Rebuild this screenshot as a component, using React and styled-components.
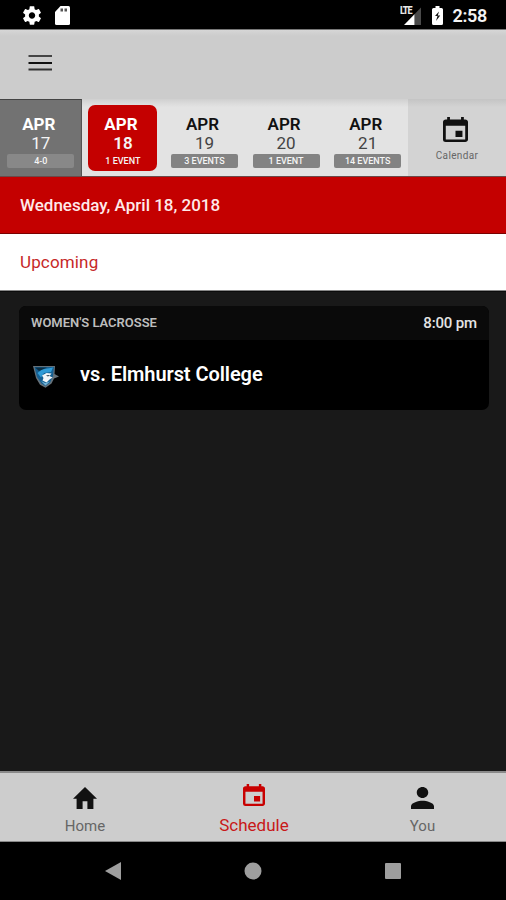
import styled, { createGlobalStyle, css } from "styled-components";

const GlobalStyle = createGlobalStyle`
  * {
    box-sizing: border-box;
  }
  body {
    margin: 0;
    background: #191919;
    font-family: Roboto, "Liberation Sans", sans-serif;
  }
`;

const Screen = styled.div`
  display: flex;
  flex-direction: column;
  width: 506px;
  height: 900px;
  overflow: hidden;
  background: #191919;
`;

const StatusBar = styled.div`
  display: flex;
  justify-content: space-between;
  height: 29px;
  padding: 6px 19px 0 23px;
  background: #000;
`;

const StatusGroup = styled.div`
  display: flex;
  align-items: flex-start;
  gap: ${(props) => props.$gap};
`;

const Clock = styled.span`
  margin-left: -2px;
  font-size: 18px;
  font-weight: 600;
  line-height: 20px;
  letter-spacing: -0.3px;
  color: #f4f4f4;
`;

const Header = styled.header`
  height: 70px;
  padding: 25px 28px;
  border-top: 1px solid #777;
  background: linear-gradient(#d6d6d6, #cccccc 6px);
`;

const DateStrip = styled.nav`
  display: flex;
  height: 78px;
  background: linear-gradient(#d0d0d0, #e3e3e3 8px);
  border-bottom: 1px solid #6b4a4a;
`;

const Day = styled.button`
  display: flex;
  flex-direction: column;
  align-items: center;
  width: 81.6px;
  height: 77px;
  padding: 15px 0 0 1px;
  border: 0;
  background: transparent;
  font-family: inherit;
  color: #111;

  ${(props) =>
    props.$past &&
    css`
      background: #727272;
      border-top: 1px solid #444;
      border-right: 1px solid #555;
      padding: 14px 0 0 1px;
      color: #fff;
    `}

  ${(props) =>
    props.$active &&
    css`
      width: 69px;
      height: 66px;
      margin: 6px 6.3px 0;
      padding: 9px 0 0 1px;
      border-radius: 7px;
      background: #c40000;
      color: #fff;
    `}
`;

const Month = styled.span`
  margin-right: 4px;
  font-size: 17px;
  font-weight: ${(props) => (props.$strong ? 700 : 600)};
  line-height: 20px;
`;

const DayNumber = styled.span`
  font-size: 17px;
  font-weight: ${(props) => (props.$strong ? 600 : 400)};
  line-height: 19px;
  color: ${(props) => props.$color};
`;

const Count = styled.span`
  width: 67px;
  height: 14px;
  margin-top: 1px;
  border-radius: 2px;
  background: ${(props) => props.$fill};
  font-size: 9px;
  font-weight: 500;
  line-height: 14px;
  text-align: center;
  color: #f5f5f5;
`;

const CalendarButton = styled.button`
  display: flex;
  flex: 1;
  flex-direction: column;
  align-items: center;
  padding: 18px 3px 0 0;
  border: 0;
  background: linear-gradient(#c4c4c4, #d3d3d3 8px);
  font-family: inherit;
  color: #111;
`;

const CalendarLabel = styled.span`
  margin: 7px 0 0 3px;
  font-size: 10px;
  line-height: 14px;
  letter-spacing: 0.35px;
  color: #666;
`;

const DateTitle = styled.h1`
  height: 57px;
  margin: 0;
  padding: 17px 20px;
  border-bottom: 1px solid #7a0000;
  background: #c40000;
  font-size: 17px;
  font-weight: 500;
  line-height: 22px;
  letter-spacing: 0;
  color: #ffeaea;
`;

const SectionTitle = styled.h2`
  height: 57px;
  margin: 0;
  padding: 17px 20px;
  border-bottom: 1px solid #888;
  background: #fff;
  font-size: 17px;
  font-weight: 400;
  line-height: 22px;
  letter-spacing: 0.15px;
  color: #c62828;
`;

const Events = styled.main`
  flex: 1;
  padding: 14px 17px 0 19px;
  border-top: 1px solid #0c0c0c;
`;

const EventCard = styled.article`
  overflow: hidden;
  height: 104px;
  border-radius: 7px;
  background: #000;
`;

const EventTop = styled.div`
  display: flex;
  justify-content: space-between;
  height: 34px;
  padding: 0 12px;
  background: #0a0a0a;
  line-height: 33px;
`;

const Sport = styled.span`
  font-size: 13px;
  font-weight: 600;
  letter-spacing: -0.02px;
  color: #bdbdbd;
`;

const StartTime = styled.span`
  font-size: 15px;
  font-weight: 500;
  letter-spacing: -0.15px;
  line-height: 34px;
  color: #e4e4e4;
`;

const EventBody = styled.div`
  display: flex;
  align-items: center;
  gap: 21px;
  height: 68px;
  padding-left: 14px;
`;

const Crest = styled.div`
  padding-top: 5px;
`;

const Opponent = styled.span`
  font-size: 20px;
  font-weight: 600;
  letter-spacing: -0.07px;
  color: #fff;
`;

const TabBar = styled.nav`
  display: flex;
  justify-content: center;
  height: 71px;
  padding-left: 2px;
  border-top: 2px solid #8a8a8a;
  border-bottom: 1px solid #888;
  background: #cdcdcd;
`;

const Tab = styled.button`
  display: flex;
  flex: 0 1 169px;
  flex-direction: column;
  align-items: center;
  padding: ${(props) => (props.$active ? "11px" : "14px")} 0 0;
  border: 0;
  background: transparent;
  font-family: inherit;
  color: ${(props) => (props.$active ? "#c80000" : "#111")};

  &:first-child {
    padding-right: 2px;
  }
  &:last-child {
    padding-left: 1px;
  }
`;

const TabLabel = styled.span`
  margin-top: ${(props) => (props.$active ? "9px" : "7px")};
  font-size: ${(props) => (props.$active ? "17px" : "15px")};
  line-height: 20px;
  color: ${(props) => (props.$active ? "#c81818" : "#666")};
`;

const SystemNav = styled.div`
  display: flex;
  justify-content: space-between;
  align-items: center;
  height: 58px;
  padding: 0 105px;
  background: #000;
  color: #9e9e9e;
`;

const Glyph = styled.svg`
  display: block;
  flex: none;
  fill: currentColor;
`;

const SettingsIcon = () => (
  <Glyph width="18" height="19" viewBox="2.2 2 19.6 20" color="#fff">
    <path d="M19.43 12.98c.04-.32.07-.64.07-.98s-.03-.66-.07-.98l2.11-1.65c.19-.15.24-.42.12-.64l-2-3.46c-.12-.22-.39-.3-.61-.22l-2.49 1c-.52-.4-1.08-.73-1.69-.98l-.38-2.65C14.46 2.18 14.25 2 14 2h-4c-.25 0-.46.18-.49.42l-.38 2.65c-.61.25-1.17.59-1.69.98l-2.49-1c-.23-.09-.49 0-.61.22l-2 3.46c-.13.22-.07.49.12.64l2.11 1.65c-.04.32-.07.65-.07.98s.03.66.07.98l-2.11 1.65c-.19.15-.24.42-.12.64l2 3.46c.12.22.39.3.61.22l2.49-1c.52.4 1.08.73 1.69.98l.38 2.65c.03.24.24.42.49.42h4c.25 0 .46-.18.49-.42l.38-2.65c.61-.25 1.17-.59 1.69-.98l2.49 1c.23.09.49 0 .61-.22l2-3.46c.12-.22.07-.49-.12-.64l-2.11-1.65zM12 15.5c-1.93 0-3.5-1.57-3.5-3.5s1.57-3.5 3.5-3.5 3.5 1.57 3.5 3.5-1.57 3.5-3.5 3.5z" />
  </Glyph>
);

const SdCardIcon = () => (
  <Glyph width="15" height="19" viewBox="0 0 15 19" color="#fff">
    <path d="M5.5 0H13.5Q15 0 15 1.5V17.5Q15 19 13.5 19H1.5Q0 19 0 17.5V6z" />
    <path d="M5.5 2.500h2.500v3H5.500zM9.500 2.500h2.500v3H9.500z" fill="#555" />
  </Glyph>
);

const Network = styled.span`
  position: relative;
  display: block;
  width: 22px;
  height: 19px;
`;

const NetworkLabel = styled.span`
  position: absolute;
  top: 0;
  left: 0.5px;
  font-size: 10px;
  font-weight: 800;
  line-height: 9px;
  letter-spacing: -1.2px;
  transform: scaleX(0.9);
  transform-origin: left;
  color: #e8e8e8;
`;

const SignalIcon = () => (
  <Glyph width="22" height="19" viewBox="0 0 22 19">
    <path d="M22 1.5V19H15.500V8.200z" fill="#4a4a4a" />
    <path d="M5 19L15.500 8.200V19z" fill="#fff" />
  </Glyph>
);

const BatteryIcon = () => (
  <Glyph width="11" height="19" viewBox="0 0 11 19" color="#fff">
    <path d="M3.5 0h4v2h2Q11 2 11 3.500v14Q11 19 9.500 19h-8Q0 19 0 17.500v-14Q0 2 1.500 2h2z" />
    <path d="M7 5.500L3 10h2.500L4 15l4.200-5.500H5.800z" fill="#111" />
  </Glyph>
);

const MenuIcon = () => (
  <Glyph width="24" height="18" viewBox="0 0 24 18">
    <path d="M.5 0h23.500v2H.5z" fill="#444" />
    <path d="M.5 7h23.500v2H.5z" fill="#111" />
    <path d="M.5 13.500h23.500v2H.5z" fill="#333" />
  </Glyph>
);

const EventIcon = ({ width, height }) => (
  <Glyph width={width} height={height} viewBox="3 1 18 20" preserveAspectRatio="none">
    <path d="M17 12h-5v5h5v-5zM16 1v2H8V1H6v2H5c-1.110 0-1.990.9-1.990 2L3 19a2 2 0 002 2h14c1.100 0 2-.9 2-2V5c0-1.100-.9-2-2-2h-1V1h-2zm3 18H5V8h14v11z" />
  </Glyph>
);

const HomeIcon = () => (
  <Glyph width="24" height="22" viewBox="2 3 20 17" preserveAspectRatio="none">
    <path d="M10 20v-6h4v6h5v-8h3L12 3 2 12h3v8z" />
  </Glyph>
);

const PersonIcon = () => (
  <Glyph width="23" height="22" viewBox="4 4 16 16" preserveAspectRatio="none">
    <path d="M12 12c2.210 0 4-1.790 4-4s-1.790-4-4-4-4 1.790-4 4 1.790 4 4 4zm0 2c-2.670 0-8 1.340-8 4v2h16v-2c0-2.660-5.330-4-8-4z" />
  </Glyph>
);

// Blue jay crest of the visiting team
const TeamLogo = () => (
  <Glyph width="26" height="22" viewBox="0 0 26 22">
    <path d="M0 0h22l-.5 8 4.500 2.500-5 2-2.500 5-6 4.300-5.500-3L3 12z" fill="#65717a" />
    <path d="M1.500 1h19.500l-1 9-3 6.500-4.500 3.500-4-2.500L4 11z" fill="#155f91" />
    <path d="M9 3.500L20 1.500l-2 4.500-7 1-3 4.500L4.500 7z" fill="#309bd6" />
    <path d="M2 1.500h12L6 5z" fill="#0b2d42" />
    <path d="M9 9.500L13.500 7l5 .5-2 2.500 3 1.500-3 2-3 3-4-2 1-2.500z" fill="#f1f6f8" />
    <path d="M13 9.500l4-.5-2 1.500z" fill="#142b3a" />
    <path d="M8 15l4 2 5-1.500-4.500 4z" fill="#74b4d8" />
  </Glyph>
);

const days = [
  { number: 17, count: "4-0", past: true },
  { number: 18, count: "1 EVENT", active: true },
  { number: 19, count: "3 EVENTS" },
  { number: 20, count: "1 EVENT" },
  { number: 21, count: "14 EVENTS" },
];

const countFill = (day) => {
  if (day.active) return "transparent";
  return day.past ? "#888" : "#838383";
};

const App = () => {
  return (
    <>
      <GlobalStyle />
      <Screen>
        <StatusBar>
          <StatusGroup $gap="14px">
            <SettingsIcon />
            <SdCardIcon />
          </StatusGroup>
          <StatusGroup $gap="11px">
            <Network>
              <SignalIcon />
              <NetworkLabel>LTE</NetworkLabel>
            </Network>
            <BatteryIcon />
            <Clock>2:58</Clock>
          </StatusGroup>
        </StatusBar>

        <Header>
          <MenuIcon />
        </Header>

        <DateStrip>
          {days.map((day) => (
            <Day key={day.number} $past={day.past} $active={day.active}>
              <Month $strong={day.past || day.active}>APR</Month>
              <DayNumber
                $strong={day.active}
                $color={day.past || day.active ? "#f5f5f5" : "#444"}
              >
                {day.number}
              </DayNumber>
              <Count $fill={countFill(day)}>{day.count}</Count>
            </Day>
          ))}
          <CalendarButton>
            <EventIcon width="25" height="25" />
            <CalendarLabel>Calendar</CalendarLabel>
          </CalendarButton>
        </DateStrip>

        <DateTitle>Wednesday, April 18, 2018</DateTitle>
        <SectionTitle>Upcoming</SectionTitle>

        <Events>
          <EventCard>
            <EventTop>
              <Sport>WOMEN'S LACROSSE</Sport>
              <StartTime>8:00 pm</StartTime>
            </EventTop>
            <EventBody>
              <Crest>
                <TeamLogo />
              </Crest>
              <Opponent>vs. Elmhurst College</Opponent>
            </EventBody>
          </EventCard>
        </Events>

        <TabBar>
          <Tab>
            <HomeIcon />
            <TabLabel>Home</TabLabel>
          </Tab>
          <Tab $active>
            <EventIcon width="22" height="22" />
            <TabLabel $active>Schedule</TabLabel>
          </Tab>
          <Tab>
            <PersonIcon />
            <TabLabel>You</TabLabel>
          </Tab>
        </TabBar>

        <SystemNav>
          <Glyph width="16" height="18" viewBox="0 0 16 18">
            <path d="M16 0v18L0 9z" />
          </Glyph>
          <Glyph width="18" height="18" viewBox="0 0 18 18">
            <circle cx="9" cy="9" r="8.5" />
          </Glyph>
          <Glyph width="16" height="16" viewBox="0 0 16 16">
            <rect width="16" height="16" rx="1" />
          </Glyph>
        </SystemNav>
      </Screen>
    </>
  );
};

export default App;
